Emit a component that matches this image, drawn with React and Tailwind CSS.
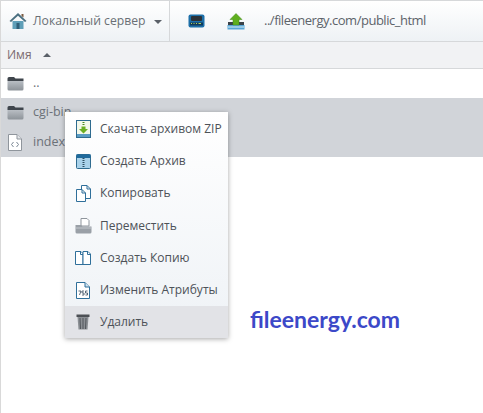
import React from 'react';

function Folder() {
  return (
    <svg width="17" height="15" viewBox="0 0 17 15">
      <defs>
        <linearGradient id="fold" x1="0" y1="0" x2="0" y2="1">
          <stop offset="0" stopColor="#b9bec4" />
          <stop offset="1" stopColor="#8d9399" />
        </linearGradient>
      </defs>
      <path d="M0.5 2.5 Q0.5 1 2 1 H7 L8.5 2.5 H16.5 V5 H0.5 Z" fill="#3f454c" />
      <path d="M0.5 5 H16.5 V13 Q16.5 14.5 15 14.5 H2 Q0.5 14.5 0.5 13 Z" fill="url(#fold)" />
    </svg>
  );
}

function HtmlFile() {
  return (
    <svg width="14" height="17" viewBox="0 0 14 17">
      <path d="M0.5 0.5 H9 L13.5 5 V16.5 H0.5 Z" fill="#fff" stroke="#8f959c" />
      <path d="M9 0.5 V5 H13.5" fill="#e4e7ea" stroke="#8f959c" />
      <path d="M5.5 8 L3.5 10.5 L5.5 13 M8.5 8 L10.5 10.5 L8.5 13" fill="none" stroke="#7a8794" />
    </svg>
  );
}

function Home() {
  return (
    <svg width="18" height="18" viewBox="0 0 18 18">
      <path d="M3.5 9 H14.5 V17 H3.5 Z" fill="#5f9fb8" />
      <rect x="7.5" y="11" width="3" height="6" fill="#2f5f78" />
      <path d="M9 1 L17.5 9 L16 10 L9 3.8 L2 10 L0.5 9 Z" fill="#4a6f80" />
      <path d="M12.5 2 H14.5 V5.5 L12.5 4 Z" fill="#7a5a40" />
    </svg>
  );
}

function Server() {
  return (
    <svg width="17" height="14" viewBox="0 0 17 14">
      <rect x="0.5" y="0.5" width="16" height="13" rx="2" fill="#1c6fa8" />
      <rect x="3" y="2" width="11" height="5" rx="1" fill="#2a3138" />
      <rect x="2" y="8.5" width="13" height="3" fill="#10395a" />
      <path d="M3 9.5 H4 M5.5 9.5 H6.5 M8 9.5 H9 M10.5 9.5 H13" stroke="#b6d45a" />
    </svg>
  );
}

function Upload() {
  return (
    <svg width="18" height="17" viewBox="0 0 18 17">
      <path d="M1 9 H17 V12 H1 Z" fill="#3a4148" />
      <path d="M0.5 12 H17.5 V16.5 H0.5 Z" fill="#58a6d6" />
      <path d="M1 14 H17" stroke="#d8eef8" />
      <path d="M9 0.5 L15 6.5 H12 V12 H6 V6.5 H3 Z" fill="#5fae1e" stroke="#3f8a12" strokeWidth="0.5" />
    </svg>
  );
}

function IconZip() {
  return (
    <svg width="15" height="18" viewBox="0 0 15 18">
      <rect x="0.5" y="0.5" width="14" height="17" fill="#f4f8ea" stroke="#2f6b8f" />
      <rect x="1" y="14" width="13" height="3" fill="#5b9cc4" />
      <path d="M7.5 2 V6" stroke="#4a8a1a" strokeDasharray="1 1" strokeWidth="2" />
      <path d="M5.5 6.5 H9.5 V9 H12 L7.5 13.5 L3 9 H5.5 Z" fill="#6cae22" />
    </svg>
  );
}

function IconArchive() {
  return (
    <svg width="15" height="15" viewBox="0 0 15 15">
      <rect x="0.5" y="0.5" width="14" height="14" rx="1" fill="#a9d2ea" stroke="#2f6b8f" />
      <rect x="0.5" y="0.5" width="14" height="3.5" fill="#1f6a9c" />
      <path d="M7.5 4 V14" stroke="#2f4f63" strokeDasharray="1 1" strokeWidth="2" />
    </svg>
  );
}

function IconCopy() {
  return (
    <svg width="15" height="17" viewBox="0 0 15 17">
      <path d="M5.5 0.5 H11 L14.5 4 V13.5 H5.5 Z" fill="#fff" stroke="#2f6f9a" />
      <path d="M11 0.5 V4 H14.5" fill="none" stroke="#2f6f9a" />
      <path d="M0.5 4.5 H6 L9.5 8 V16.5 H0.5 Z" fill="#fff" stroke="#2f6f9a" />
      <path d="M6 4.5 V8 H9.5" fill="none" stroke="#2f6f9a" />
    </svg>
  );
}

function IconMove() {
  return (
    <svg width="17" height="16" viewBox="0 0 17 16">
      <path d="M6 0.5 H12 L14 2.5 V8 H6 Z" fill="#fff" stroke="#8f959c" />
      <path d="M0.5 7 H6 L7.5 8.5 H16.5 V14 Q16.5 15.5 15 15.5 H2 Q0.5 15.5 0.5 14 Z" fill="#9aa0a7" />
      <path d="M1 10 H16" stroke="#c4c8cd" />
    </svg>
  );
}

function IconDup() {
  return (
    <svg width="16" height="14" viewBox="0 0 16 14">
      <path d="M0.5 0.5 H6 L8 2.5 V13.5 H0.5 Z" fill="#fff" stroke="#2f6f9a" />
      <path d="M8 0.5 H13 L15.5 3 V13.5 H8 Z" fill="#fff" stroke="#2f6f9a" />
      <path d="M5.5 0.5 V3.5 H8 M12.5 0.5 V3.5 H15.5" fill="none" stroke="#2f6f9a" />
    </svg>
  );
}

function IconAttr() {
  return (
    <svg width="14" height="17" viewBox="0 0 14 17">
      <path d="M0.5 0.5 H9 L13.5 5 V16.5 H0.5 Z" fill="#fff" stroke="#2f6f9a" />
      <path d="M9 0.5 V5 H13.5" fill="#cfe3f0" stroke="#2f6f9a" />
      <path d="M2.5 9 H5 L3.5 13 M6 9 H8 M6 9 V11 H8 V13 H6 M9.5 9 H11.5 M9.5 9 V11 H11.5 V13 H9.5" fill="none" stroke="#33485a" strokeWidth="0.8" />
    </svg>
  );
}

function IconTrash() {
  return (
    <svg width="14" height="16" viewBox="0 0 14 16">
      <rect x="0.5" y="0.5" width="13" height="2.5" fill="#4c5055" />
      <path d="M1.5 3 H12.5 L11.5 15.5 H2.5 Z" fill="#8b8f94" />
      <path d="M4 4 L4.5 15 M7 4 V15 M10 4 L9.5 15" stroke="#53575c" />
    </svg>
  );
}

const menu = [
  ['Скачать архивом ZIP', IconZip],
  ['Создать Архив', IconArchive],
  ['Копировать', IconCopy],
  ['Переместить', IconMove],
  ['Создать Копию', IconDup],
  ['Изменить Атрибуты', IconAttr],
  ['Удалить', IconTrash],
];

function Row({ icon, name, selected }) {
  return (
    <div className={`flex items-center pl-[6px] ${selected ? 'h-[29.5px] bg-[#d1d4d9]' : 'h-[29px] bg-white'}`}>
      <div className="flex w-[26px] items-center">{icon}</div>
      <span className="text-[12.5px] text-[#6b7178]">{name}</span>
    </div>
  );
}

export default function App() {
  return (
    <div className="relative h-[413px] w-[483px] overflow-hidden border-l border-l-[#d9d9d9] bg-white font-['Open_Sans',sans-serif]">
      <div className="flex h-[42px] items-center border-y border-y-[#d6d8da] bg-gradient-to-b from-white to-[#eef2f5]">
        <div className="flex h-full w-[169px] items-center border-r border-r-[#d6d8da] pl-[8px]">
          <Home />
          <span className="ml-[6px] text-[12.2px] text-[#6a6f75]">Локальный сервер</span>
          <span className="ml-[8px] mt-[1px] h-0 w-0 border-x-[4px] border-t-[4px] border-x-transparent border-t-[#5a6068]" />
        </div>
        <div className="ml-[18px]"><Server /></div>
        <div className="ml-[22px]"><Upload /></div>
        <span className="ml-[19px] text-[13px] tracking-[-0.48px] text-[#5d636a]">../fileenergy.com/public_html</span>
      </div>
      <div className="flex h-[27px] items-center border-b border-b-[#d6d8da] bg-[#f1f2f4] pl-[6px]">
        <span className="text-[12px] text-[#7a6a70]">Имя</span>
        <span className="ml-[11px] h-0 w-0 border-x-[4px] border-b-[4px] border-x-transparent border-b-[#5a6068]" />
      </div>
      <Row icon={<Folder />} name=".." />
      <Row icon={<Folder />} name="cgi-bin" selected />
      <Row icon={<div className="ml-px"><HtmlFile /></div>} name="index.html" selected />

      <div className="absolute left-[64px] top-[112px] w-[163px] bg-gradient-to-b from-white to-[#eef2f6] pt-px shadow-[0_1px_5px_rgba(0,0,0,0.35)]">
        {menu.map(([label, Icon], i) => (
          <div key={label} className={`flex h-[32.2px] items-center ${i === 6 ? 'bg-[#e2e3e7]' : ''}`}>
            <div className="flex w-[35px] justify-center pl-[1px]"><Icon /></div>
            <span className="text-[12px] text-[#4d5258]">{label}</span>
          </div>
        ))}
      </div>

      <div className="absolute left-[249px] top-[305px] font-['Lato',sans-serif] text-[23px] font-bold leading-[28px] text-[#3c48c8]">
        fileenergy.com
      </div>
    </div>
  );
}
